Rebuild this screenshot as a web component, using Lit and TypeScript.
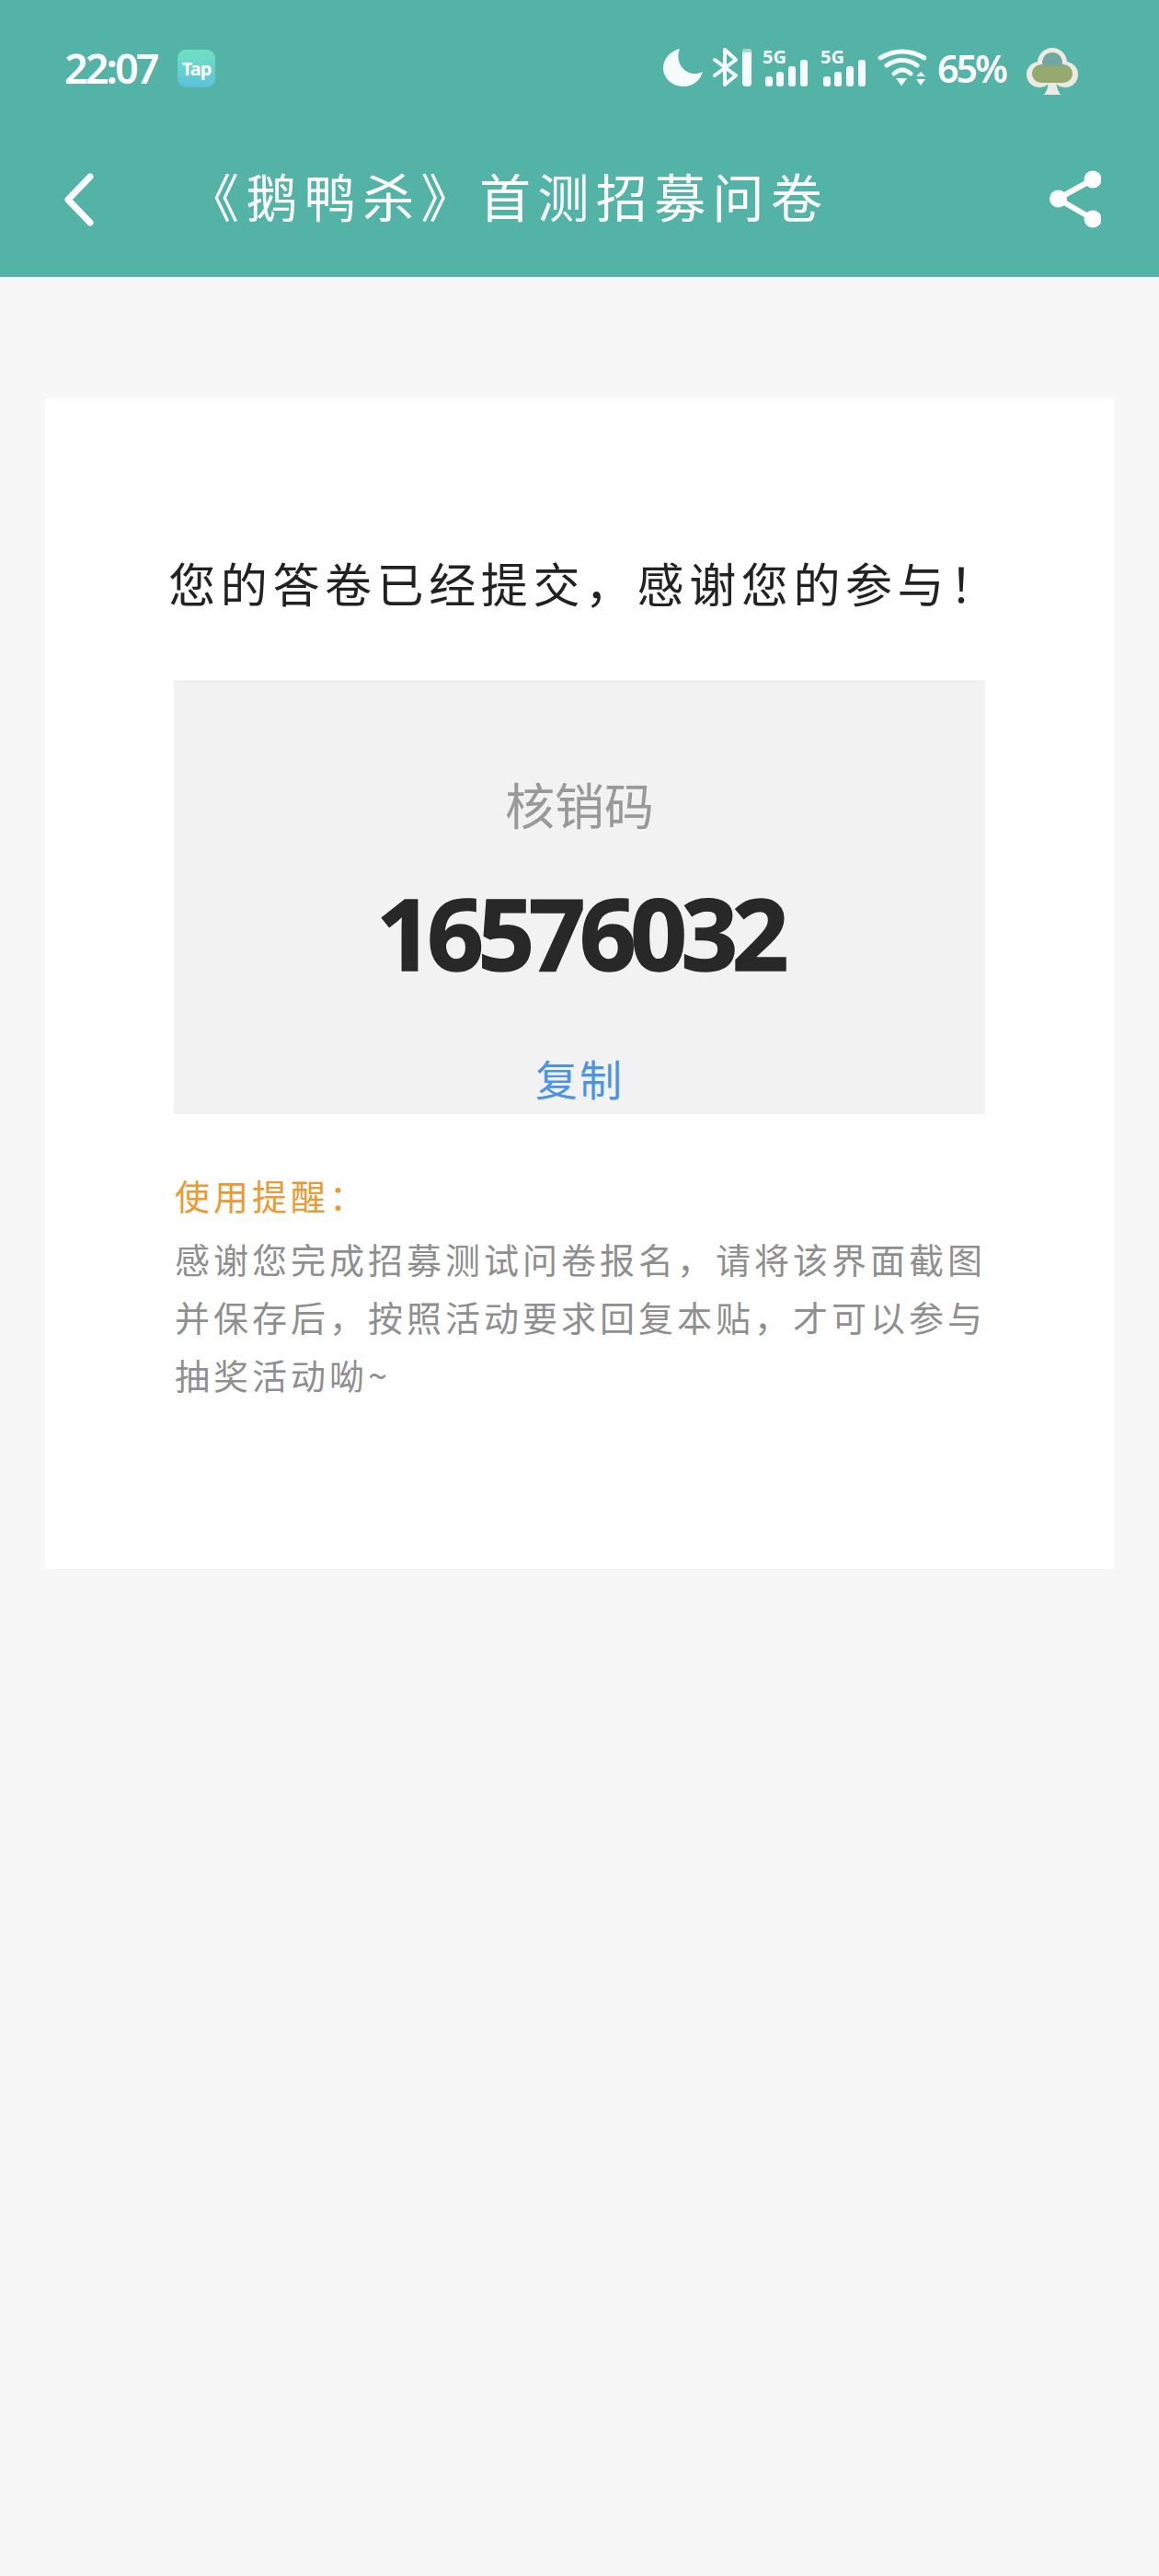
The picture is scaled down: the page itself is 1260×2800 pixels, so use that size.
import { LitElement, html, css, svg } from "lit";
import { customElement } from "lit/decorators.js";

const signal = svg`
  <text x="0" y="17" class="five">5G</text>
  <rect x="3" y="31" width="8" height="11" rx="3"/>
  <rect x="15" y="26" width="8" height="16" rx="3"/>
  <rect x="28" y="20" width="8" height="22" rx="3"/>
  <rect x="41" y="13" width="8" height="29" rx="3"/>`;

@customElement("app-root")
export class AppRoot extends LitElement {
  static styles = css`
    :host { display: block; width: 1260px; height: 2800px; background: #f7f7f7; font-family: "Noto Sans CJK SC", "Noto Sans", sans-serif; overflow: hidden; }
    .top { background: #52b3a6; height: 301px; color: #fff; display: flex; flex-direction: column; box-sizing: border-box; }
    .status { height: 52px; margin-top: 52px; padding: 0 88px 0 70px; display: flex; align-items: flex-start; }
    .time { font-family: "Noto Sans", sans-serif; font-weight: 600; font-size: 45px; line-height: 44px; letter-spacing: -3px; width: 123px; }
    .tap { width: 41px; height: 41px; margin-top: 2px; border-radius: 9px; background: linear-gradient(#70e3c0, #5cc0dc); color: #fff; font: 700 20px/41px "Noto Sans", sans-serif; letter-spacing: -1px; text-align: center; }
    .icons { margin-left: auto; display: flex; align-items: flex-start; flex: none; }
    .icons svg { display: block; fill: #f4fbfa; flex: none; }
    .bt { margin-left: 10px; }
    .bar { margin-left: 5px; }
    .sig { margin: -8px 0 0 12px; }
    .sig2 { margin: -8px 0 0 13px; }
    .wifi { margin-left: 12px; }
    .five { font: 700 20px "Noto Sans", sans-serif; fill: #f4fbfa; }
    .pct { font-family: "Noto Sans", sans-serif; font-weight: 600; font-size: 41px; line-height: 44px; letter-spacing: -3px; width: 72px; margin: 0 25px 0 12px; white-space: nowrap; }
    .nav { display: flex; align-items: center; height: 64px; margin-top: 80px; padding: 0 63px 0 70px; }
    .nav svg { flex: none; display: block; }
    .back { margin-top: 2px; }
    .title { flex: 1; font-size: 56px; line-height: 64px; letter-spacing: 7.4px; margin-left: 102px; padding-bottom: 8px; white-space: nowrap; font-weight: 400; }
    .card { margin: 132px 49px 0; height: 1272px; background: #fff; box-sizing: border-box; padding-top: 165px; }
    .done { text-align: center; font-size: 51px; line-height: 70px; letter-spacing: 5.6px; color: #222; white-space: nowrap; padding-left: 12px; }
    .box { margin: 71px 0 0 140px; width: 882px; height: 472px; background: #f2f2f2; text-align: center; overflow: hidden; }
    .label { margin-top: 100px; font-size: 54px; line-height: 70px; color: #999; }
    .code { font-family: "Noto Sans", sans-serif; margin-top: 47px; font-size: 108px; line-height: 116px; font-weight: 700; letter-spacing: -6.5px; color: #282828; -webkit-text-stroke: 1.5px #282828; }
    .copy { margin-top: 69px; font-size: 46px; line-height: 60px; color: #4a94e8; letter-spacing: 2px; }
    .note { margin: 59px 0 0 141px; width: 890px; }
    .note-title { font-size: 38px; line-height: 58px; letter-spacing: 4px; color: #ea9a34; }
    .note-text { margin-top: 8px; font-size: 38px; line-height: 63px; letter-spacing: 4px; color: #8f8f8f; }
  `;

  render() {
    return html`
      <div class="top">
        <div class="status">
          <div class="time">22:07</div>
          <div class="tap">Tap</div>
          <div class="icons">
            <svg width="43" height="44" viewBox="0 0 43 44"><path d="M18 1C7 4 0 12 0 22c0 11 10 20 22 20 10 0 18-6 21-16-8 4-17 2-22-4C16 16 15 8 18 1z"/></svg>
            <svg class="bt" width="28" height="44" viewBox="0 0 28 44"><path d="M3 13l23 17-12 10V2l12 11L3 30" fill="none" stroke="#f4fbfa" stroke-width="4" stroke-linejoin="round" stroke-linecap="round"/></svg>
            <svg class="bar" width="10" height="44" viewBox="0 0 10 44"><rect x="0" y="1" width="10" height="41" rx="4"/><path d="M0 5a4 4 0 0 1 4-4h2a4 4 0 0 1 4 4z" fill="#a8d5cf"/></svg>
            <svg class="sig" width="50" height="52" viewBox="0 -8 50 52">${signal}</svg>
            <svg class="sig2" width="50" height="52" viewBox="0 -8 50 52">${signal}</svg>
            <svg class="wifi" width="53" height="44" viewBox="0 0 53 44">
              <g fill="none" stroke="#f4fbfa" stroke-width="5" stroke-linecap="round">
                <path d="M3 11Q27-3 51 11"/>
                <path d="M10 19Q27 8 43 19"/>
                <path d="M18 28Q27 20 36 28"/>
              </g>
              <path d="M20 33h12l-6 8.500z"/>
              <path d="M47 26l5 5H42zM47 41l5-7H42z"/>
            </svg>
            <div class="pct">65%</div>
            <svg width="56" height="52" viewBox="0 0 56 52">
              <defs>
                <linearGradient id="treeFill" x1="0" y1="0" x2="0" y2="1">
                  <stop offset="0.34" stop-color="#72a6a2"/>
                  <stop offset="0.52" stop-color="#96aa6e"/>
                </linearGradient>
              </defs>
              <g fill="#eeeae2">
                <circle cx="28" cy="16" r="16"/>
                <circle cx="14" cy="29" r="14"/>
                <circle cx="42" cy="29" r="14"/>
                <path d="M24 38h8l2 8 3 5H19l3-5z"/>
              </g>
              <path d="M28 5c7 0 11 5 11 12v1c6 0 11 4 11 10 0 6-5 10-11 10H17C11 38 6 34 6 28c0-6 5-10 11-10v-1C17 10 21 5 28 5z" fill="url(#treeFill)"/>
              <path d="M24 38h8l1 7-5-3-5 3z" fill="#eeeae2"/>
            </svg>
          </div>
        </div>
        <div class="nav">
          <svg class="back" width="32" height="60" viewBox="0 0 32 60"><path d="M28 5L4 30l24 25" fill="none" stroke="#fff" stroke-width="7" stroke-linecap="round" stroke-linejoin="round"/></svg>
          <div class="title">《鹅鸭杀》首测招募问卷</div>
          <svg width="56" height="64" viewBox="0 0 56 64"><path d="M47 11L9 32l38 22" fill="none" stroke="#fff" stroke-width="6"/><circle cx="47" cy="11" r="9.500" fill="#fff"/><circle cx="9.500" cy="32" r="9.500" fill="#fff"/><circle cx="47" cy="54" r="9.500" fill="#fff"/></svg>
        </div>
      </div>
      <div class="card">
        <div class="done">您的答卷已经提交，感谢您的参与！</div>
        <div class="box">
          <div class="label">核销码</div>
          <div class="code">16576032</div>
          <div class="copy">复制</div>
        </div>
        <div class="note">
          <div class="note-title">使用提醒：</div>
          <div class="note-text">感谢您完成招募测试问卷报名，请将该界面截图并保存后，按照活动要求回复本贴，才可以参与抽奖活动呦~</div>
        </div>
      </div>
    `;
  }
}
